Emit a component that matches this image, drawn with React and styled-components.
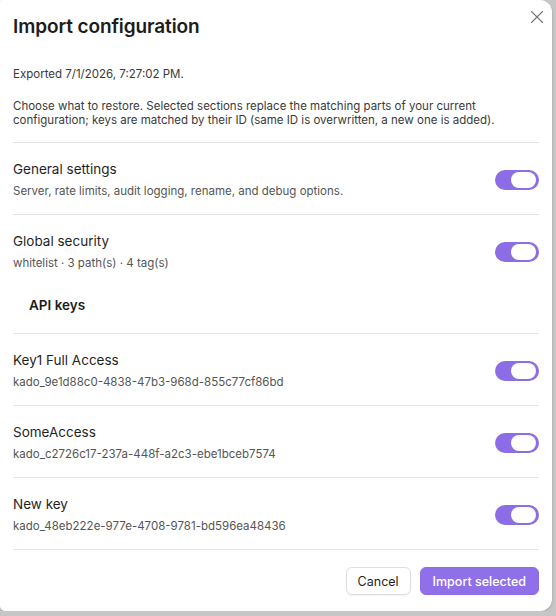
import styled, { createGlobalStyle } from 'styled-components';

const GlobalStyle = createGlobalStyle`
  html, body {
    margin: 0;
    padding: 0;
    background: #c6c6c6;
  }
  body {
    font-family: Inter, "Noto Sans", "Liberation Sans", sans-serif;
    color: #1f1f1f;
    -webkit-font-smoothing: antialiased;
  }
`;

const Dialog = styled.div`
  position: relative;
  width: 552px;
  box-sizing: border-box;
  padding: 15px 13px 16px;
  background: #ffffff;
  border-radius: 1px 12px 12px 5px;
  box-shadow: 0 1px 3px rgba(0, 0, 0, 0.18);
`;

const Title = styled.h2`
  margin: 0;
  font-size: 19px;
  line-height: 24px;
  font-weight: 600;
  color: #1c1c1c;
  letter-spacing: -0.1px;
`;

const Close = styled.button`
  position: absolute;
  top: 10px;
  right: 8px;
  width: 14px;
  height: 14px;
  padding: 0;
  border: none;
  background: none;
  color: #767676;
  cursor: pointer;
`;

const Meta = styled.p`
  margin: 28px 0 18px;
  font-size: 11.5px;
  line-height: 14px;
  color: #3a3a3a;
`;

const Intro = styled.p`
  margin: 0 0 15px;
  font-size: 11.5px;
  line-height: 14px;
  color: #3a3a3a;
`;

const Row = styled.div`
  display: flex;
  align-items: center;
  justify-content: space-between;
  padding: 16px 0 15px;
  border-top: 1px solid #e4e4e4;
  border-bottom: ${(p) => (p.$last ? '1px solid #e4e4e4' : 'none')};
`;

const Info = styled.div`
  display: flex;
  flex-direction: column;
  gap: 4px;
`;

const Name = styled.div`
  font-size: 13.5px;
  line-height: 20px;
  color: #1f1f1f;
`;

const Detail = styled.div`
  font-size: 11.5px;
  line-height: 16px;
  color: #555555;
`;

const GroupHeading = styled.h3`
  margin: 9px 0 18px;
  padding-left: 16px;
  font-size: 13.5px;
  line-height: 20px;
  font-weight: 600;
  color: #1c1c1c;
`;

const Switch = styled.span`
  position: relative;
  flex: none;
  width: 44px;
  height: 20px;
  border-radius: 10px;
  background: ${(p) => (p.$on ? '#8c6de6' : '#d4d4d4')};
  margin-top: 2px;
`;

const Thumb = styled.span`
  position: absolute;
  top: 2px;
  right: ${(p) => (p.$on ? '3px' : 'auto')};
  left: ${(p) => (p.$on ? 'auto' : '3px')};
  width: 25px;
  height: 16px;
  border-radius: 8px;
  background: #ffffff;
`;

const Footer = styled.div`
  display: flex;
  justify-content: flex-end;
  gap: 9px;
  padding-top: 17px;
`;

const Button = styled.button`
  height: 28px;
  padding: 0 ${(p) => (p.$primary ? '12px' : '11px')};
  border-radius: 6px;
  font-family: inherit;
  font-size: 12.5px;
  font-weight: ${(p) => (p.$primary ? 500 : 400)};
  border: 1px solid ${(p) => (p.$primary ? '#8c6de6' : '#dedede')};
  background: ${(p) => (p.$primary ? '#8f70e8' : '#ffffff')};
  color: ${(p) => (p.$primary ? '#ffffff' : '#1f1f1f')};
  box-shadow: ${(p) => (p.$primary ? 'none' : '0 1px 1px rgba(0,0,0,0.05)')};
  cursor: pointer;
`;

const sections = [
  { name: 'General settings', detail: 'Server, rate limits, audit logging, rename, and debug options.' },
  { name: 'Global security', detail: 'whitelist · 3 path(s) · 4 tag(s)' },
];

const keys = [
  { name: 'Key1 Full Access', detail: 'kado_9e1d88c0-4838-47b3-968d-855c77cf86bd' },
  { name: 'SomeAccess', detail: 'kado_c2726c17-237a-448f-a2c3-ebe1bceb7574' },
  { name: 'New key', detail: 'kado_48eb222e-977e-4708-9781-bd596ea48436' },
];

function Toggle({ on = true }) {
  return (
    <Switch $on={on} role="switch" aria-checked={on}>
      <Thumb $on={on} />
    </Switch>
  );
}

function Item({ name, detail, last }) {
  return (
    <Row $last={last}>
      <Info>
        <Name>{name}</Name>
        <Detail>{detail}</Detail>
      </Info>
      <Toggle on />
    </Row>
  );
}

export default function App() {
  return (
    <>
      <GlobalStyle />
      <Dialog>
        <Title>Import configuration</Title>
        <Close aria-label="Close">
          <svg width="14" height="14" viewBox="0 0 14 14" fill="none" stroke="currentColor" strokeWidth="1.1" strokeLinecap="round">
            <path d="M1.5 1.5l11 11M12.5 1.5l-11 11" />
          </svg>
        </Close>
        <Meta>Exported 7/1/2026, 7:27:02 PM.</Meta>
        <Intro>
          Choose what to restore. Selected sections replace the matching parts of your current
          configuration; keys are matched by their ID (same ID is overwritten, a new one is added).
        </Intro>
        {sections.map((s) => (
          <Item key={s.name} {...s} />
        ))}
        <GroupHeading>API keys</GroupHeading>
        {keys.map((k, i) => (
          <Item key={k.name} {...k} last={i === keys.length - 1} />
        ))}
        <Footer>
          <Button>Cancel</Button>
          <Button $primary>Import selected</Button>
        </Footer>
      </Dialog>
    </>
  );
}
